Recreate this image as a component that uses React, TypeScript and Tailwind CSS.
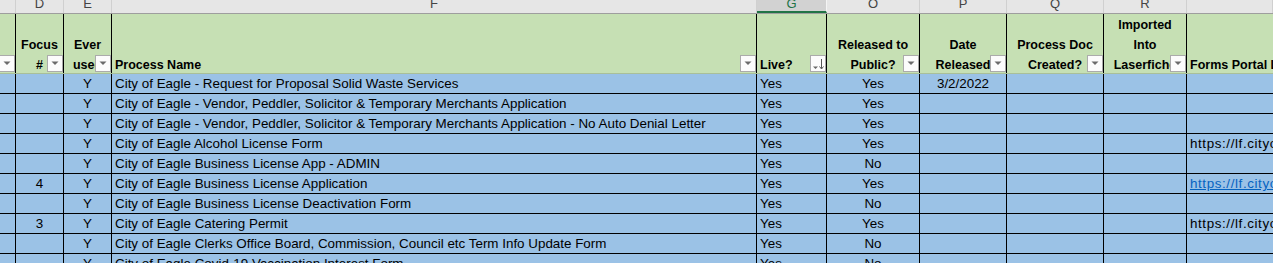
const grid = 'grid grid-cols-[16px_48px_48px_645px_70px_93px_87px_97px_83px_86px]';

type Row = {
  focus?: string;
  name: string;
  released: string;
  date?: string;
  link?: 'plain' | 'blue';
};

const rows: Row[] = [
  { name: 'City of Eagle - Request for Proposal Solid Waste Services', released: 'Yes', date: '3/2/2022' },
  { name: 'City of Eagle - Vendor, Peddler, Solicitor & Temporary Merchants Application', released: 'Yes' },
  {
    name: 'City of Eagle - Vendor, Peddler, Solicitor & Temporary Merchants Application - No Auto Denial Letter',
    released: 'Yes',
  },
  { name: 'City of Eagle Alcohol License Form', released: 'Yes', link: 'plain' },
  { name: 'City of Eagle Business License App - ADMIN', released: 'No' },
  { focus: '4', name: 'City of Eagle Business License Application', released: 'Yes', link: 'blue' },
  { name: 'City of Eagle Business License Deactivation Form', released: 'No' },
  { focus: '3', name: 'City of Eagle Catering Permit', released: 'Yes', link: 'plain' },
  { name: 'City of Eagle Clerks Office Board, Commission, Council etc Term Info Update Form', released: 'No' },
  { name: 'City of Eagle Covid-19 Vaccination Interest Form', released: 'No' },
];

const letters = ['', 'D', 'E', 'F', 'G', 'O', 'P', 'Q', 'R', ''];

function FilterButton({ sorted }: { sorted?: boolean }) {
  return (
    <div className="absolute right-0 bottom-[1px] w-[16px] h-[17px] bg-[#fcfcfc] border border-[#ababab] flex items-center justify-center">
      {sorted ? (
        <svg width="14" height="15" viewBox="0 0 14 15">
          <path d="M2 10.5h5l-2.5 2.5z" fill="#666" />
          <path d="M10.5 3v9.5" stroke="#555" strokeWidth="1" />
          <path d="M8.5 10.5l2 2.5 2-2.5" stroke="#555" strokeWidth="1" fill="none" />
        </svg>
      ) : (
        <svg width="8" height="5" viewBox="0 0 8 5">
          <path d="M0.5 0.5h7l-3.5 3.5z" fill="#6b6b6b" />
        </svg>
      )}
    </div>
  );
}

function HeaderCell({
  lines,
  align = 'center',
  filter = true,
  sorted,
  last,
}: {
  lines: string[];
  align?: 'center' | 'left';
  filter?: boolean;
  sorted?: boolean;
  last?: boolean;
}) {
  return (
    <div
      className={`relative overflow-hidden flex flex-col justify-end font-bold text-[12.5px] leading-[20px] whitespace-nowrap ${
        last ? '' : 'border-r border-black'
      } ${align === 'center' ? 'items-center' : 'items-start pl-[3px]'}`}
    >
      <div className={`flex flex-col translate-y-[2px] ${align === 'center' ? 'items-center' : 'items-start'}`}>
        {lines.map((l, i) => (
          <span key={i}>{l}</span>
        ))}
      </div>
      {filter && <FilterButton sorted={sorted} />}
    </div>
  );
}

function Cell({
  children,
  align = 'center',
  last,
}: {
  children?: React.ReactNode;
  align?: 'center' | 'left';
  last?: boolean;
}) {
  return (
    <div
      className={`overflow-hidden whitespace-nowrap leading-[19px] ${last ? '' : 'border-r border-black'} ${
        align === 'center' ? 'text-center' : 'text-left pl-[3px]'
      }`}
    >
      {children}
    </div>
  );
}

export default function App() {
  return (
    <div className="w-[1273px] h-[263px] overflow-hidden bg-white text-black font-['Liberation_Sans',Arial,sans-serif] text-[13.4px]">
      {/* column letters */}
      <div className={`${grid} h-[14px] bg-[#e6e6e6] border-b border-[#9e9e9e]`}>
        {letters.map((l, i) => (
          <div
            key={i}
            className={`overflow-hidden text-center leading-[7px] text-[13px] ${
              l === 'G'
                ? 'bg-[#d2d2d2] text-[#217346] border-b-2 border-[#217346] border-r border-r-[#f4f4f4]'
                : 'text-[#444] border-r border-[#d0d0d0]'
            }`}
          >
            {l}
          </div>
        ))}
      </div>

      {/* table header */}
      <div className={`${grid} h-[60px] bg-[#c6e0b4] border-b border-[#a9bf99]`}>
        <HeaderCell lines={['']} />
        <HeaderCell lines={['Focus', '#']} />
        <HeaderCell lines={['Ever', 'used']} />
        <HeaderCell lines={['Process Name']} align="left" />
        <HeaderCell lines={['Live?']} align="left" sorted />
        <HeaderCell lines={['Released to', 'Public?']} />
        <HeaderCell lines={['Date', 'Released']} />
        <HeaderCell lines={['Process Doc', 'Created?']} />
        <HeaderCell lines={['Imported', 'Into', 'Laserfiche']} />
        <HeaderCell lines={['Forms Portal Link']} align="left" filter={false} last />
      </div>

      {/* data */}
      {rows.map((r, i) => (
        <div key={i} className={`${grid} h-[20px] bg-[#9bc2e6] border-b border-black`}>
          <Cell />
          <Cell>{r.focus}</Cell>
          <Cell>Y</Cell>
          <Cell align="left">{r.name}</Cell>
          <Cell align="left">Yes</Cell>
          <Cell>{r.released}</Cell>
          <Cell>{r.date}</Cell>
          <Cell />
          <Cell />
          <Cell align="left" last>
            {r.link === 'plain' && <span className="tracking-[0.6px]">https://lf.cityofeagle.org/Forms</span>}
            {r.link === 'blue' && (
              <span className="tracking-[0.6px] text-[#0563c1] underline">https://lf.cityofeagle.org/Forms</span>
            )}
          </Cell>
        </div>
      ))}
    </div>
  );
}
